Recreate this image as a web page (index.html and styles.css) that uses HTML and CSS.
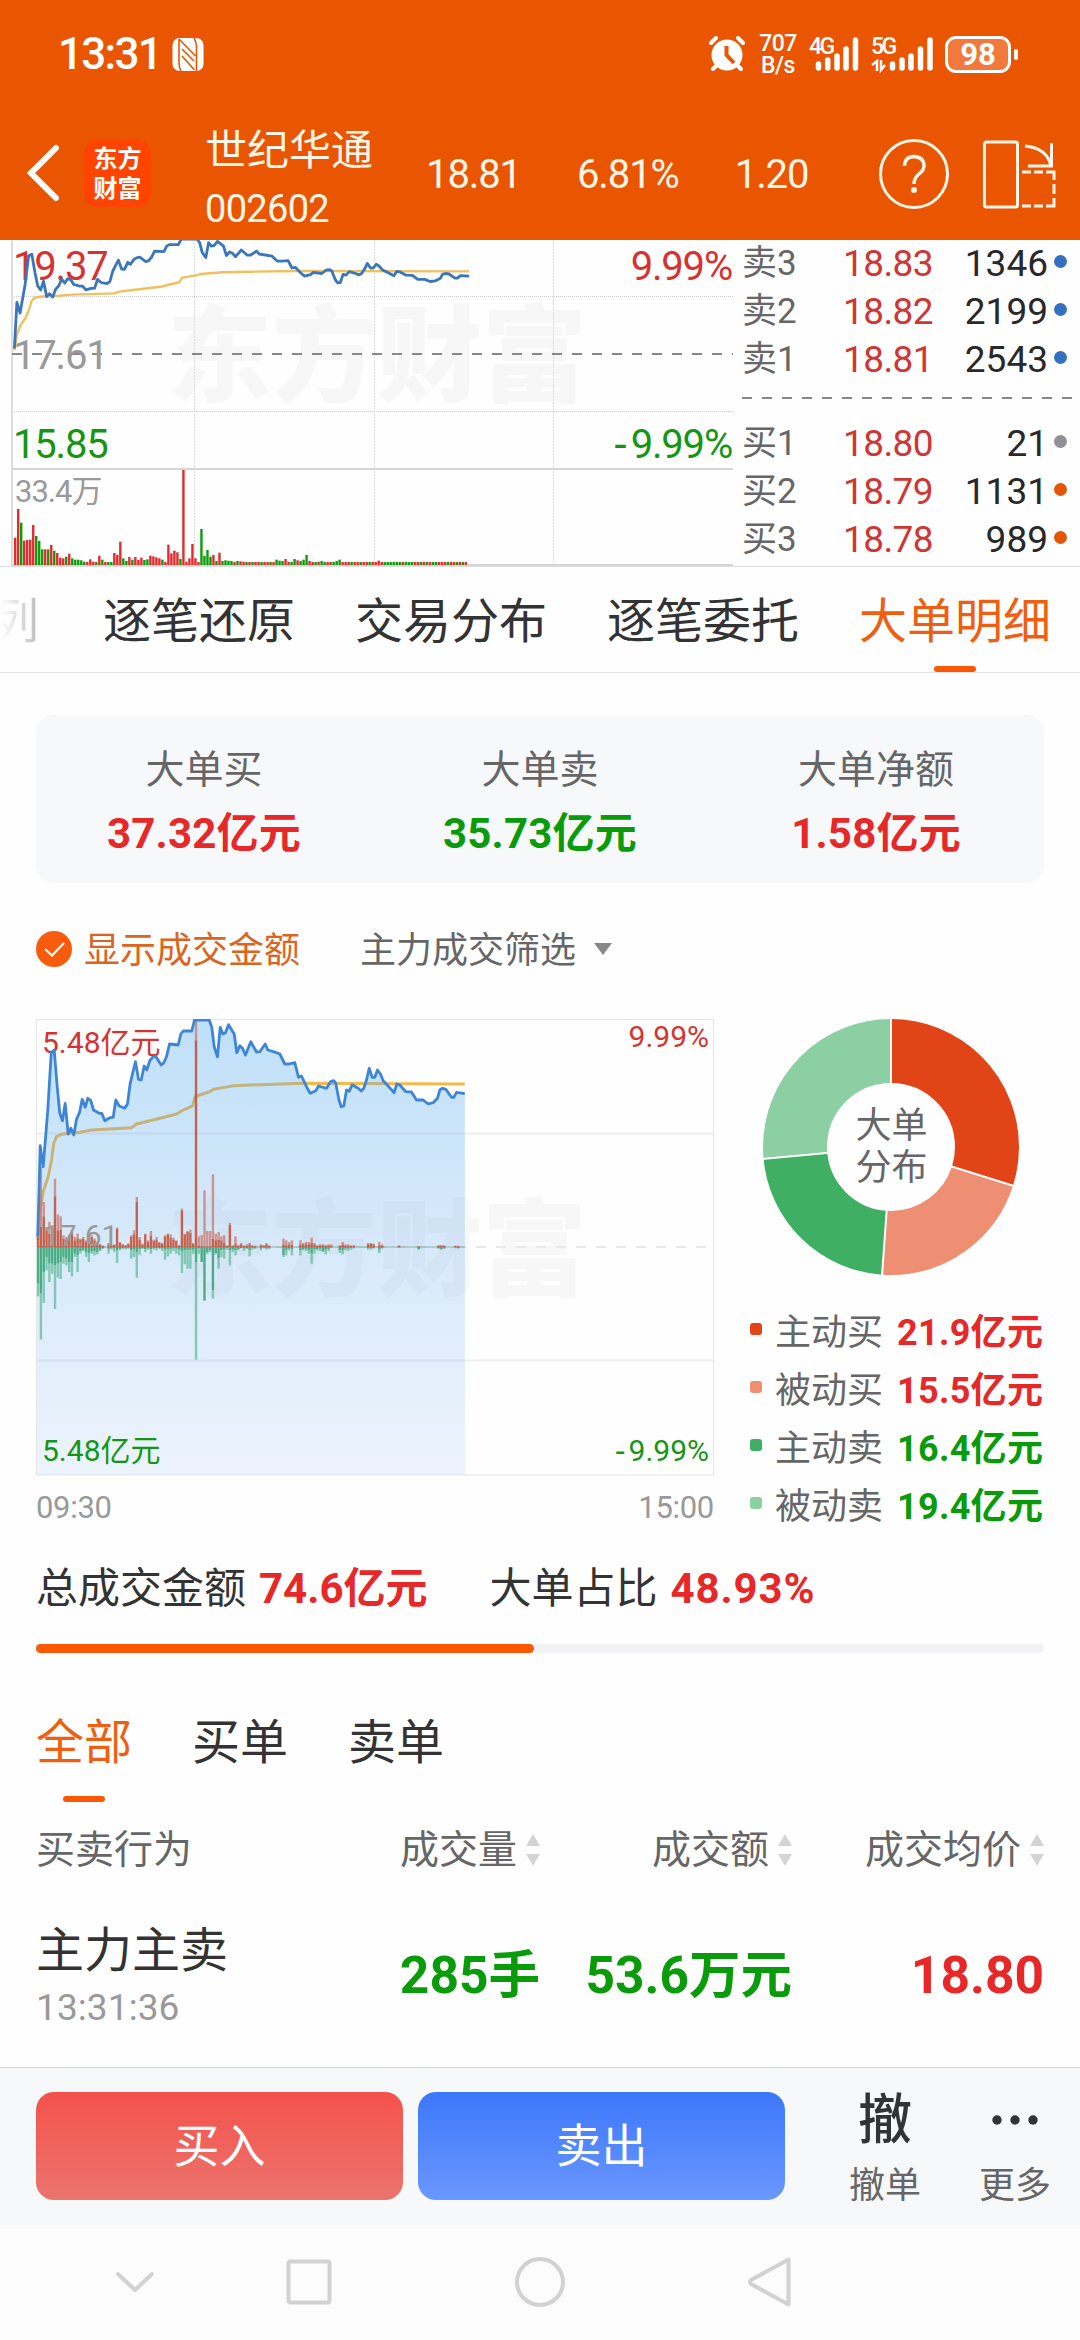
FILE: index.html
```html
<!DOCTYPE html>
<html lang="zh-CN">
<head>
    <meta charset="UTF-8">
    <title>世纪华通 002602</title>
    <link rel="stylesheet" href="styles.css">
</head>
<body>
    <header class="header">
        <div class="status-bar">
            <span class="clock">13:31</span>
            <svg class="nfc" width="32" height="33" viewBox="0 0 32 33">
                <rect x="0.500" y="0" width="31" height="33" rx="7" fill="#fff"/>
                <path d="M7 1 V24 Q7 30 9 33 M7 1 L23.500 18 M10 11 L22 23 M10 18 L22.500 32 M24.500 33 V9 Q24.500 4 22 0" fill="none" stroke="#ea5502" stroke-width="1.600"/>
            </svg>
            <div class="status-right">
                <svg width="36" height="36" viewBox="0 0 36 36">
                    <path d="M2 7 L7 2 M34 7 L29 2 M8 29 L4 33 M28 29 L32 33" stroke="#fff" stroke-width="4" stroke-linecap="round"/>
                    <circle cx="18" cy="19" r="15.5" fill="#fff"/>
                    <path d="M17.5 10 V19 L25 27" fill="none" stroke="#ea5502" stroke-width="4"/>
                </svg>
                <div class="net-speed"><span>707</span><span>B/s</span></div>
                <svg class="signal" width="52" height="36" viewBox="0 0 52 36">
                    <text x="0" y="18" class="signal-text">4G</text>
                    <path d="M9.500 28 V32 M18.700 24 V32 M28 20 V32 M37 13 V32 M46.500 4 V32" stroke="#fff" stroke-width="5.500" stroke-linecap="round"/>
                </svg>
                <svg class="signal" width="64" height="36" viewBox="0 0 64 36">
                    <text x="0" y="18" class="signal-text">5G</text>
                    <path d="M1 29 L6 25 V35 M10 24 V34 L14 29" fill="none" stroke="#fff" stroke-width="2.500"/>
                    <path d="M21.500 28 V32 M31 24 V32 M40 20 V32 M49.500 13 V32 M59 4 V32" stroke="#fff" stroke-width="5.500" stroke-linecap="round"/>
                </svg>
                <div class="battery">98</div>
            </div>
        </div>
        <div class="nav">
            <svg class="back" width="34" height="58" viewBox="0 0 34 58">
                <path d="M30 4 L5 29 L30 54" fill="none" stroke="#fff" stroke-width="6" stroke-linecap="round"/>
            </svg>
            <div class="logo">东方<br>财富</div>
            <div class="stock">
                <div class="stock-name">世纪华通</div>
                <div class="stock-code">002602</div>
            </div>
            <div class="quote">
                <span>18.81</span>
                <span>6.81%</span>
                <span>1.20</span>
            </div>
            <div class="nav-icons">
                <svg width="72" height="72" viewBox="0 0 72 72">
                    <circle cx="36" cy="36" r="33.500" fill="none" stroke="#fff6e8" stroke-width="3"/>
                    <path d="M26.500 28 Q27 18.500 36 18.500 Q46 19 46 28 Q46 32 41 36 Q36 40 36 46" fill="none" stroke="#fff6e8" stroke-width="3.500"/>
                    <circle cx="36" cy="52" r="3" fill="#fff6e8"/>
                </svg>
                <svg width="74" height="72" viewBox="0 0 74 72" fill="none" stroke="#fff6e8" stroke-width="3">
                    <rect x="1.500" y="4" width="33" height="65" rx="2"/>
                    <path d="M42 8 Q64 10 68 28 M68.500 5 V28 H45"/>
                    <path d="M39 34 H48 M51 34 H60 M63 34 H71 V42 M71 46 V56 M71 60 V68 H63 M60 68 H51 M48 68 H39"/>
                </svg>
            </div>
        </div>
    </header>

    <section class="market">
        <svg id="minuteChart" class="minute-chart" width="735" height="326" viewBox="0 0 735 326">
            <text x="167" y="153" class="watermark">东方财富</text>
            <path d="M12 56.500 H733 M12 171.500 H733" stroke="#ccc" stroke-dasharray="1 1"/>
            <path d="M194.500 0 V325 M374.500 0 V325 M553.500 0 V325" stroke="#ddd" stroke-dasharray="2 1"/>
            <path d="M12 0 V326" stroke="#ddd" stroke-width="2"/>
            <path d="M12 229 H733 M12 325 H733" stroke="#d5d5d5" stroke-width="2"/>
            <path d="M12 114 H733" stroke="#888" stroke-width="2" stroke-dasharray="10 10"/>
            <text x="13" y="40" class="axis red">19.37</text>
            <text x="13" y="129" class="axis gray">17.61</text>
            <text x="13" y="218" class="axis green">15.85</text>
            <text x="732" y="40" class="axis red" text-anchor="end">9.99%</text>
            <text x="732" y="218" class="axis green" text-anchor="end"><tspan class="minus">-</tspan>9.99%</text>
            <text x="15" y="262" class="axis-volume">33.4万</text>
            <g class="volume"></g>
            <polyline class="avg-line"/>
            <polyline class="price-line"/>
        </svg>
        <div class="book">
            <div class="book-row"><span>卖3</span><b>18.83</b><em>1346</em><i class="dot blue"></i></div>
            <div class="book-row"><span>卖2</span><b>18.82</b><em>2199</em><i class="dot blue"></i></div>
            <div class="book-row"><span>卖1</span><b>18.81</b><em>2543</em><i class="dot blue"></i></div>
            <svg class="book-split" width="332" height="2" viewBox="0 0 332 2"><path d="M0 1 H332" stroke="#888" stroke-width="2" stroke-dasharray="10 10"/></svg>
            <div class="book-row"><span>买1</span><b>18.80</b><em>21</em><i class="dot"></i></div>
            <div class="book-row"><span>买2</span><b>18.79</b><em>1131</em><i class="dot orange"></i></div>
            <div class="book-row"><span>买3</span><b>18.78</b><em>989</em><i class="dot orange"></i></div>
        </div>
    </section>

    <nav class="tabs">
        <span class="tab faded">列</span>
        <span class="tab">逐笔还原</span>
        <span class="tab">交易分布</span>
        <span class="tab">逐笔委托</span>
        <span class="tab active">大单明细</span>
    </nav>

    <main class="content">
        <div class="summary">
            <div class="summary-item"><label>大单买</label><strong class="red">37.32亿元</strong></div>
            <div class="summary-item"><label>大单卖</label><strong class="green">35.73亿元</strong></div>
            <div class="summary-item"><label>大单净额</label><strong class="red">1.58亿元</strong></div>
        </div>

        <div class="filters">
            <svg width="36" height="36" viewBox="0 0 36 36">
                <circle cx="18" cy="18" r="18" fill="#f75b0b"/>
                <path d="M9 18 L16 24.500 L28 12" fill="none" stroke="#fff" stroke-width="2.200"/>
            </svg>
            <span class="filter-on">显示成交金额</span>
            <span class="filter">主力成交筛选</span>
            <span class="caret"></span>
        </div>

        <div class="charts">
            <div class="flow">
                <svg id="flowChart" width="678" height="457" viewBox="0 0 678 457">
                    <defs>
                        <linearGradient id="area" x1="0" y1="0" x2="0" y2="1">
                            <stop offset="0" stop-color="#4aa8ee" stop-opacity="0.350"/>
                            <stop offset="1" stop-color="#6aa4ee" stop-opacity="0.120"/>
                        </linearGradient>
                    </defs>
                    <text x="131" y="268" class="watermark">东方财富</text>
                    <path d="M0 114.500 H677 M0 341.500 H677" stroke="#eee" stroke-width="2"/>
                    <path d="M0 228 H677" stroke="#e8e8e8" stroke-width="2" stroke-dasharray="10 10"/>
                    <rect x="0.500" y="0.500" width="677" height="455.500" fill="none" stroke="#e6e6e6"/>
                    <polyline class="avg-line"/>
                    <polygon class="area"/>
                    <g class="bars"></g>
                    <text x="7" y="227" class="axis-small gray">17.61</text>
                    <text x="6" y="34" class="axis-small red">5.48亿元</text>
                    <text x="6" y="442" class="axis-small green">5.48亿元</text>
                    <text x="673" y="28" class="axis-small red" text-anchor="end">9.99%</text>
                    <text x="673" y="442" class="axis-small green" text-anchor="end"><tspan class="minus">-</tspan>9.99%</text>
                    <polyline class="price-line"/>
                </svg>
                <div class="flow-time"><span>09:30</span><span>15:00</span></div>
            </div>
            <div class="share">
                <svg class="donut" width="258" height="258" viewBox="0 0 258 258">
                    <g fill="none" stroke-width="64" transform="rotate(-90 129 129)">
                        <circle cx="129" cy="129" r="96" pathLength="360" stroke="#e14417" stroke-dasharray="107.600 360"/>
                        <circle cx="129" cy="129" r="96" pathLength="360" stroke="#ee8f73" stroke-dasharray="76.300 360" stroke-dashoffset="-107.600"/>
                        <circle cx="129" cy="129" r="96" pathLength="360" stroke="#3faf63" stroke-dasharray="81 360" stroke-dashoffset="-183.900"/>
                        <circle cx="129" cy="129" r="96" pathLength="360" stroke="#8ccfa3" stroke-dasharray="95.100 360" stroke-dashoffset="-264.900"/>
                    </g>
                    <path d="M129 70 V0 M188 148 L252 168 M125 188 L120 258 M70 134.500 L0 141" stroke="#fff" stroke-width="2"/>
                    <text x="129.500" y="120" text-anchor="middle" class="donut-text">大单</text>
                    <text x="129.500" y="162" text-anchor="middle" class="donut-text">分布</text>
                </svg>
                <ul class="legend">
                    <li><i class="c1"></i><span>主动买</span><b class="red">21.9亿元</b></li>
                    <li><i class="c2"></i><span>被动买</span><b class="red">15.5亿元</b></li>
                    <li><i class="c3"></i><span>主动卖</span><b class="green">16.4亿元</b></li>
                    <li><i class="c4"></i><span>被动卖</span><b class="green">19.4亿元</b></li>
                </ul>
            </div>
        </div>

        <div class="totals">
            <span>总成交金额</span><b class="red">74.6亿元</b>
            <span class="ratio">大单占比</span><b class="red percent">48.93%</b>
        </div>
        <div class="progress"><div class="progress-bar"></div></div>

        <div class="sub-tabs">
            <span class="sub-tab active">全部</span>
            <span class="sub-tab">买单</span>
            <span class="sub-tab">卖单</span>
        </div>

        <div class="row table-head">
            <div class="cell">买卖行为</div>
            <div class="cell">成交量<i class="sort"></i></div>
            <div class="cell">成交额<i class="sort"></i></div>
            <div class="cell">成交均价<i class="sort"></i></div>
        </div>
        <div class="row table-row">
            <div class="cell"><div class="action">主力主卖</div><div class="time">13:31:36</div></div>
            <div class="cell green">285手</div>
            <div class="cell green">53.6万元</div>
            <div class="cell red">18.80</div>
        </div>
    </main>

    <footer class="trade-bar">
        <button class="btn buy">买入</button>
        <button class="btn sell">卖出</button>
        <div class="tool"><span class="tool-icon">撤</span><span>撤单</span></div>
        <div class="tool">
            <span class="tool-icon"><svg width="48" height="12" viewBox="0 0 48 12" fill="#333"><circle cx="6" cy="6" r="4.700"/><circle cx="24" cy="6" r="4.700"/><circle cx="42" cy="6" r="4.700"/></svg></span>
            <span>更多</span>
        </div>
    </footer>

    <div class="system-nav">
        <svg width="1080" height="116" viewBox="0 0 1080 116" fill="none" stroke="#d2d2d2" stroke-width="4" stroke-linejoin="round" stroke-linecap="round">
            <path d="M118 49 L135 65 L152 49"/>
            <rect x="288.500" y="36.500" width="41" height="41" rx="2"/>
            <circle cx="540" cy="57" r="23"/>
            <path d="M788.500 34.500 V79.500 L751 59 Q749 57 751 55 Z"/>
        </svg>
    </div>
    <script src="charts.js"></script>
</body>
</html>
```

FILE: styles.css
```css
* {
    box-sizing: border-box;
}

body {
    margin: 0;
    width: 1080px;
    height: 2340px;
    overflow: hidden;
    display: flex;
    flex-direction: column;
    font-family: Roboto, "Noto Sans CJK SC", sans-serif;
    background-color: #fefefe;
    color: #333;
}

.red {
    color: #e62828;
    fill: #d63232;
}

.green {
    color: #0a9b0a;
    fill: #149614;
}

.gray {
    fill: #999;
}

/* header */
.header {
    height: 240px;
    background-color: #ea5502;
    color: #fff6e8;
}

.status-bar {
    height: 108px;
    display: flex;
    align-items: center;
    padding-left: 58px;
    padding-right: 69px;
    color: #fff;
}

.clock {
    width: 114px;
    font-size: 44px;
    font-weight: 500;
    letter-spacing: -1.7px;
}

.status-right {
    margin-left: auto;
    display: flex;
    align-items: center;
}

.net-speed {
    display: flex;
    flex-direction: column;
    align-items: center;
    width: 40px;
    margin: 2px 11px 0 13px;
    font-size: 23px;
    font-weight: 500;
    line-height: 22px;
    letter-spacing: -0.5px;
}

.signal {
    margin-right: 10px;
    overflow: visible;
}

.signal-text {
    font-size: 23px;
    font-weight: 500;
    fill: #fff;
    letter-spacing: -2.5px;
}

.battery {
    position: relative;
    width: 66px;
    height: 37px;
    border: 3px solid #fff;
    border-radius: 11px;
    background-color: #f0793b;
    font-size: 31px;
    font-weight: 700;
    line-height: 32px;
    text-align: center;
}

.battery::after {
    content: "";
    position: absolute;
    right: -10px;
    top: 10px;
    width: 4px;
    height: 11px;
    border-radius: 2px;
    background-color: #fff;
}

.nav {
    display: flex;
    align-items: center;
    height: 130px;
    padding-left: 26px;
}

.logo {
    width: 67px;
    height: 67px;
    margin-left: 24px;
    padding-top: 4px;
    border-radius: 14px;
    background-color: #ff4400;
    color: #fff;
    font-size: 24px;
    font-weight: 700;
    line-height: 30px;
    text-align: center;
}

.stock {
    width: 222px;
    margin-top: 9px;
    margin-left: 54px;
}

.stock-name {
    font-size: 42px;
    line-height: 60px;
    margin-top: 2px;
}

.stock-code {
    font-size: 38px;
    line-height: 56px;
    letter-spacing: -0.7px;
}

.quote {
    display: flex;
    width: 452px;
    font-size: 40px;
    margin-top: 3px;
    margin-left: -1px;
    letter-spacing: -1.1px;
}

.quote span {
    margin-right: 56px;
}

.nav-icons {
    display: flex;
    gap: 33px;
    margin-top: 1px;
}

/* quote chart and order book */
.market {
    display: flex;
    height: 327px;
    border-bottom: 1px solid #ddd;
}

.minute-chart {
    flex: none;
}

.watermark {
    font-family: "Noto Sans CJK SC", sans-serif;
    font-size: 105px;
    font-weight: 900;
    fill: #f7f7f7;
}

.axis {
    font-size: 40px;
    letter-spacing: -1.2px;
}

.axis-volume {
    font-size: 31px;
    letter-spacing: -1px;
    fill: #999;
}

.axis-small {
    font-size: 30px;
}

.minus {
    font-family: "DejaVu Sans", sans-serif;
    letter-spacing: 3px;
}

.price-line {
    fill: none;
    stroke: #3a76ba;
    stroke-width: 2.8;
    stroke-linejoin: round;
}

.avg-line {
    fill: none;
    stroke: #f0c060;
    stroke-width: 2.4;
}

.area {
    fill: url(#area);
}

#flowChart .price-line {
    stroke: #3d85d6;
}

#flowChart .avg-line {
    stroke: #f6b948;
    stroke-width: 3;
}

.book {
    width: 337px;
    margin-left: 7px;
}

.book-row {
    display: flex;
    align-items: center;
    height: 48px;
    font-size: 37px;
    line-height: 48px;
    color: #666;
}

.book-row span {
    width: 101px;
    font-size: 35px;
}

.book-row b {
    width: 95px;
    font-weight: 400;
    letter-spacing: -0.6px;
    color: #cf3636;
}

.book-row em {
    flex: 1;
    font-style: normal;
    text-align: right;
    color: #282828;
}

.dot {
    width: 13px;
    height: 13px;
    margin: -6px 12px 0 6px;
    border-radius: 50%;
    background-color: #919096;
}

.dot.blue {
    background-color: #3370c0;
}

.dot.orange {
    background-color: #e65505;
}

.book-split {
    display: block;
    margin: 13px 0 21px;
}

/* tabs */
.tabs {
    display: flex;
    gap: 60px;
    height: 106px;
    margin-left: -5px;
    border-bottom: 1px solid #e2e2e2;
    flex: none;
}

.tab {
    position: relative;
    font-size: 48px;
    line-height: 110px;
    white-space: nowrap;
}

.faded {
    margin-left: -4px;
    margin-right: 4px;
    color: transparent;
    background: linear-gradient(90deg, #fff 20%, #bbb);
    background-clip: text;
    -webkit-background-clip: text;
}

.tab.active,
.sub-tab.active {
    color: #ee5f12;
}

.tab.active::after,
.sub-tab.active::after {
    content: "";
    position: absolute;
    left: 50%;
    bottom: 0;
    width: 42px;
    height: 6px;
    margin-left: -21px;
    border-radius: 3px;
    background-color: #fa5805;
}

/* content */
.content {
    flex: 1;
    padding: 42px 36px 0;
}

.summary {
    display: flex;
    height: 168px;
    border-radius: 18px;
    background-color: #f7f8fa;
}

.summary-item {
    flex: 1;
    display: flex;
    flex-direction: column;
    align-items: center;
    padding-top: 23px;
}

.summary-item label {
    font-size: 39px;
    line-height: 64px;
    color: #666;
}

.summary-item strong {
    font-size: 42px;
    line-height: 64px;
    letter-spacing: 0.2px;
}

.filters {
    display: flex;
    align-items: center;
    height: 60px;
    margin-top: 36px;
    font-size: 36px;
    line-height: 60px;
}

.filter-on {
    margin-left: 12px;
    padding-top: 4px;
    color: #dc6421;
}

.filter {
    margin-left: 60px;
    padding-top: 4px;
    color: #666;
}

.caret {
    margin-left: 18px;
    border: 9px solid transparent;
    border-top: 12px solid #888;
    border-bottom: 0;
}

.charts {
    display: flex;
    margin-top: 40px;
    height: 519px;
}

.flow {
    width: 678px;
}

.flow svg {
    display: block;
}

.flow-time {
    display: flex;
    justify-content: space-between;
    padding-top: 2px;
    font-size: 31px;
    line-height: 60px;
    color: #999;
    letter-spacing: -0.3px;
}

.share {
    width: 330px;
    padding-left: 36px;
}

.donut {
    display: block;
    margin: -1px 0 0 12px;
}

.donut-text {
    font-size: 36px;
    fill: #666;
}

.legend {
    list-style: none;
    margin: 24px 0 0;
    padding: 0;
}

.legend li {
    display: flex;
    align-items: center;
    height: 58px;
    font-size: 36px;
    white-space: nowrap;
    color: #666;
}

.legend i {
    width: 12px;
    height: 12px;
    margin-right: 13px;
    border-radius: 3px;
}

.legend span {
    width: 122px;
}

.legend b {
    letter-spacing: 0.3px;
}

.c1 { background-color: #e14417; }
.c2 { background-color: #ee8f73; }
.c3 { background-color: #3faf63; }
.c4 { background-color: #8ccfa3; }

.totals {
    display: flex;
    margin-top: 20px;
    font-size: 42px;
    line-height: 62px;
}

.totals b {
    margin-left: 13px;
}

.totals .percent {
    letter-spacing: 0.9px;
}

.ratio {
    margin-left: 62px;
}

.progress {
    height: 9px;
    margin-top: 24px;
    border-radius: 5px;
    background-color: #f2f2f4;
}

.progress-bar {
    width: 49.4%;
    height: 9px;
    border-radius: 5px;
    background-color: #fc5803;
}

.sub-tabs {
    display: flex;
    gap: 60px;
    margin-top: 29px;
}

.sub-tab {
    position: relative;
    height: 120px;
    font-size: 48px;
    line-height: 122px;
}

.row {
    display: flex;
}

.cell {
    width: 252px;
    text-align: right;
    white-space: nowrap;
}

.cell:first-child {
    text-align: left;
}

.table-head {
    height: 96px;
    font-size: 39px;
    line-height: 98px;
    color: #666;
}

.table-head .cell {
    display: flex;
    align-items: center;
    justify-content: flex-end;
}

.table-head .cell:first-child {
    justify-content: flex-start;
}

.sort {
    display: flex;
    flex-direction: column;
    gap: 8px;
    margin-left: 9px;
}

.sort::before,
.sort::after {
    content: "";
    border: 7px solid transparent;
}

.sort::before {
    border-top: 0;
    border-bottom: 12px solid #d4d4d4;
}

.sort::after {
    border-bottom: 0;
    border-top: 12px solid #d4d4d4;
}

.table-row {
    padding-top: 17px;
}

.table-row .cell {
    font-size: 51.5px;
    font-weight: 700;
    line-height: 121px;
}

.table-row .action {
    font-size: 48px;
    font-weight: 400;
    line-height: 72px;
}

.table-row .time {
    font-size: 37px;
    font-weight: 400;
    line-height: 42px;
    letter-spacing: 0.1px;
    color: #999;
}

/* bottom bar */
.trade-bar {
    display: flex;
    flex: none;
    height: 158px;
    padding: 24px 0 0 36px;
    border-top: 1px solid #d4d6da;
    background-color: #f7f8fa;
}

.btn {
    width: 367px;
    height: 108px;
    margin-right: 15px;
    padding: 0;
    border: none;
    border-radius: 18px;
    color: #fff;
    font: 46px/108px Roboto, "Noto Sans CJK SC", sans-serif;
}

.buy {
    background: linear-gradient(#f4524b, #eb746e);
}

.sell {
    background: linear-gradient(#3c77f9, #6b97ff);
}

.tool {
    display: flex;
    flex-direction: column;
    align-items: center;
    width: 130px;
    margin-left: 20px;
    font-size: 36px;
    line-height: 72px;
    color: #666;
}

.tool + .tool {
    margin-left: 0;
}

.tool-icon {
    height: 58px;
    font-size: 54px;
    font-weight: 500;
    line-height: 58px;
    color: #333;
}

.tool-icon svg {
    display: block;
    margin-top: 22px;
}

.system-nav {
    flex: none;
    height: 115px;
    background-color: #fcfcfc;
}
```

FILE: charts.js
```js
// Price and average lines on a 2031 x 1365 grid (240 minutes, +-10%)
var GRID_W = 2031;
var GRID_H = 1365;

var price = [
    4,650, 11,377, 20,440, 34,270, 44,100, 53,90, 62,200, 70,280, 78,302, 86,250, 95,342, 103,325, 112,345,
    120,298, 129,278, 137,238, 146,262, 154,235, 163,242, 171,270, 188,280, 196,280, 205,302, 220,293,
    230,292, 238,240, 248,258, 265,265, 273,252, 281,190, 297,125, 306,178, 314,180, 323,138, 331,150,
    340,122, 348,112, 357,108, 374,135, 382,128, 390,110, 399,72, 425,75, 433,42, 440,33, 466,33, 474,0,
    518,0, 526,22, 533,80, 543,110, 551,22, 559,42, 567,38, 576,14, 593,42, 601,98, 610,77, 618,85,
    627,105, 643,65, 660,96, 670,95, 686,72, 694,90, 720,98, 730,102, 745,132, 758,132, 775,128, 786,172,
    795,168, 810,200, 821,220, 838,212, 846,198, 870,205, 882,185, 892,182, 898,190, 907,238, 914,260,
    922,258, 930,210, 938,214, 947,194, 965,205, 974,213, 982,205, 990,180, 998,145, 1007,172, 1015,172,
    1023,150, 1032,162, 1040,182, 1057,200, 1073,218, 1081,192, 1090,195, 1108,215, 1125,216, 1140,240,
    1160,240, 1175,252, 1190,248, 1203,235, 1210,210, 1218,205, 1228,208, 1245,232, 1252,232, 1260,217, 1285,221
];

var average = [
    4,660, 11,570, 20,515, 35,470, 45,420, 52,370, 60,350, 75,343, 100,340, 130,337, 165,330, 220,327, 285,323,
    300,312, 350,300, 420,282, 440,270, 468,258, 476,230, 490,225, 520,215, 530,208, 590,197, 670,194,
    800,190, 1285,192
];

// volume per minute, r = up, g = down
var volume = ("82r 168r 127g 73r 75r 76r 120r 87g 72g 47g 47r 47g 60r 43g 36r 22r 20r 25g 34r 20g 16g 16g 14g 10g " +
    "9r 17r 10r 9g 28r 16g 9r 9g 9g 36r 30r 70r 20g 12g 24r 16g 24r 15r 22r 15g 17g 28r 26r 23r 20r 16g 9r 61r 35r 43r " +
    "38r 18g 285r 10r 20r 63r 20r 9r 108g 28g 45g 25g 30r 12g 37r 12g 14g 13g 12g 9r 12g 11r 10r 9g 9r 9g 9r 9r 9g 9r 9r " +
    "9g 9r 16g 13g 12g 18r 9r 9g 18g 14r 12g 16g 30g 12r 9r 9g 10r 12g 9g 9r 9r 9g 12g 16g 9r 9r 9r 9g 9r 9r 9g 9r 9r 9g 9r " +
    "9r 13r 9r 9g 9g 9g 9g 9g 9g 9r 9g 9g 9g 9r 9r 9g 9r 9g 9r 9g 9g 9r 9r 9r 9g 9r 9r 9g 9r 9g 9r").split(" ");

// minute, buy, active buy, sell, active sell
var orders = [
    [0,30,28,148,110], [1,240,60,278,138], [2,135,92,168,75], [3,60,50,70,30], [4,75,40,105,50], [5,60,50,80,50],
    [6,205,152,186,55], [7,98,50,92,50], [8,92,52,96,45], [9,35,25,50,30], [10,30,22,55,35], [11,35,28,75,45],
    [12,45,38,88,45], [13,30,20,30,20], [14,40,25,75,25], [15,25,22,20,12], [16,30,24,12,10], [17,20,15,30,15],
    [18,45,20,45,18], [19,35,30,20,12], [20,25,20,25,12], [21,15,10,22,15], [22,8,8,12,10], [23,4,4,6,4],
    [25,12,8,20,6], [26,5,5,8,4], [27,8,6,15,5], [28,58,54,48,10], [29,15,13,10,6], [30,8,8,6,4], [31,5,5,8,4],
    [32,10,10,5,4], [33,35,30,35,10], [34,50,38,30,8], [35,150,135,92,15], [36,30,22,25,6], [37,10,8,6,4],
    [38,40,38,15,6], [39,20,15,8,5], [40,48,34,20,6], [41,22,18,8,4], [42,30,22,10,4], [43,15,12,6,4],
    [44,12,10,12,5], [45,35,32,38,8], [46,40,38,28,6], [47,38,28,20,6], [48,28,22,12,4], [49,20,18,20,5],
    [50,5,5,25,8], [51,115,110,78,12], [52,40,38,52,10], [53,48,45,65,10], [54,52,42,65,8], [55,12,10,20,8],
    [56,681,620,338,45], [57,32,4,20,4], [58,36,2,45,45], [59,170,2,162,160], [60,48,2,20,16], [61,48,2,15,10],
    [62,218,25,155,130], [63,40,20,22,18], [64,45,22,65,35], [65,32,20,30,10], [66,35,12,35,8], [67,5,3,8,4],
    [68,72,66,55,10], [69,5,4,15,8], [70,32,10,25,10], [71,5,4,10,6], [72,12,8,4,3], [73,4,3,12,4],
    [74,8,4,6,4], [75,12,8,28,10], [76,5,4,8,4], [77,4,2,6,3], [79,8,5,10,5], [80,6,4,4,2], [81,12,8,8,4], [82,5,3,6,3],
    [87,25,8,30,25], [88,20,5,25,10], [89,15,6,10,5], [90,20,6,25,6], [93,20,8,25,10], [94,12,8,10,6],
    [95,15,8,12,6], [96,15,8,20,10], [97,28,12,50,20], [98,12,8,20,8], [99,5,4,10,6], [100,8,5,12,5],
    [101,8,5,15,12], [102,5,4,22,8], [103,8,5,12,6], [104,8,4,3,2], [107,5,3,18,10], [108,15,8,22,10],
    [109,8,4,10,5], [110,8,4,12,5], [111,5,3,8,4], [112,6,3,4,2], [117,12,8,8,4], [118,12,9,8,3], [119,10,8,5,3],
    [121,15,5,18,8], [122,8,4,5,3], [128,5,3,2,1], [135,3,2,8,6], [142,6,4,6,4], [143,6,4,8,6], [144,5,3,6,3],
    [148,4,3,4,2], [149,4,2,5,3]
];

function scalePoints(data, x0, y0, w, h) {
    var out = [];
    for (var i = 0; i < data.length; i += 2) {
        out.push((x0 + data[i] * w / GRID_W).toFixed(1) + "," + (y0 + data[i + 1] * h / GRID_H).toFixed(1));
    }
    return out.join(" ");
}

function addBar(parent, x, y, h, width, color) {
    var rect = document.createElementNS("http://www.w3.org/2000/svg", "rect");
    rect.setAttribute("x", x.toFixed(2));
    rect.setAttribute("y", y.toFixed(2));
    rect.setAttribute("width", width);
    rect.setAttribute("height", h.toFixed(2));
    rect.setAttribute("fill", color);
    parent.appendChild(rect);
}

var minute = document.getElementById("minuteChart");
minute.querySelector(".price-line").setAttribute("points", scalePoints(price, 13, -1, 721, 230));
minute.querySelector(".avg-line").setAttribute("points", scalePoints(average, 13, -1, 721, 230));
var volumeGroup = minute.querySelector(".volume");
volume.forEach(function (item, i) {
    var h = parseInt(item, 10) / 3;
    addBar(volumeGroup, 14 + i * 3.004, 325 - h, h, 2.4, item.slice(-1) === "r" ? "#e02c2c" : "#0d9b0d");
});

var flow = document.getElementById("flowChart");
var line = scalePoints(price, 0.5, 1, 677, 455);
flow.querySelector(".price-line").setAttribute("points", line);
flow.querySelector(".avg-line").setAttribute("points", scalePoints(average, 0.5, 1, 677, 455));
flow.querySelector(".area").setAttribute("points", "1,456 1,217 " + line + " 429,456");
var bars = flow.querySelector(".bars");
addBar(bars, 1, 227.5, 1, 428, "rgba(90,150,110,0.6)");
orders.forEach(function (o) {
    var x = 0.9 + o[0] * 2.82;
    addBar(bars, x, 228 - o[1] / 3, (o[1] - o[2]) / 3, 2.4, "rgba(200,120,110,0.75)");
    addBar(bars, x, 228 - o[2] / 3, o[2] / 3, 2.4, "rgba(196,78,54,0.88)");
    addBar(bars, x, 228, o[4] / 3, 2.4, "rgba(52,165,115,0.88)");
    addBar(bars, x, 228 + o[4] / 3, (o[3] - o[4]) / 3, 2.4, "rgba(100,188,155,0.75)");
});
```
